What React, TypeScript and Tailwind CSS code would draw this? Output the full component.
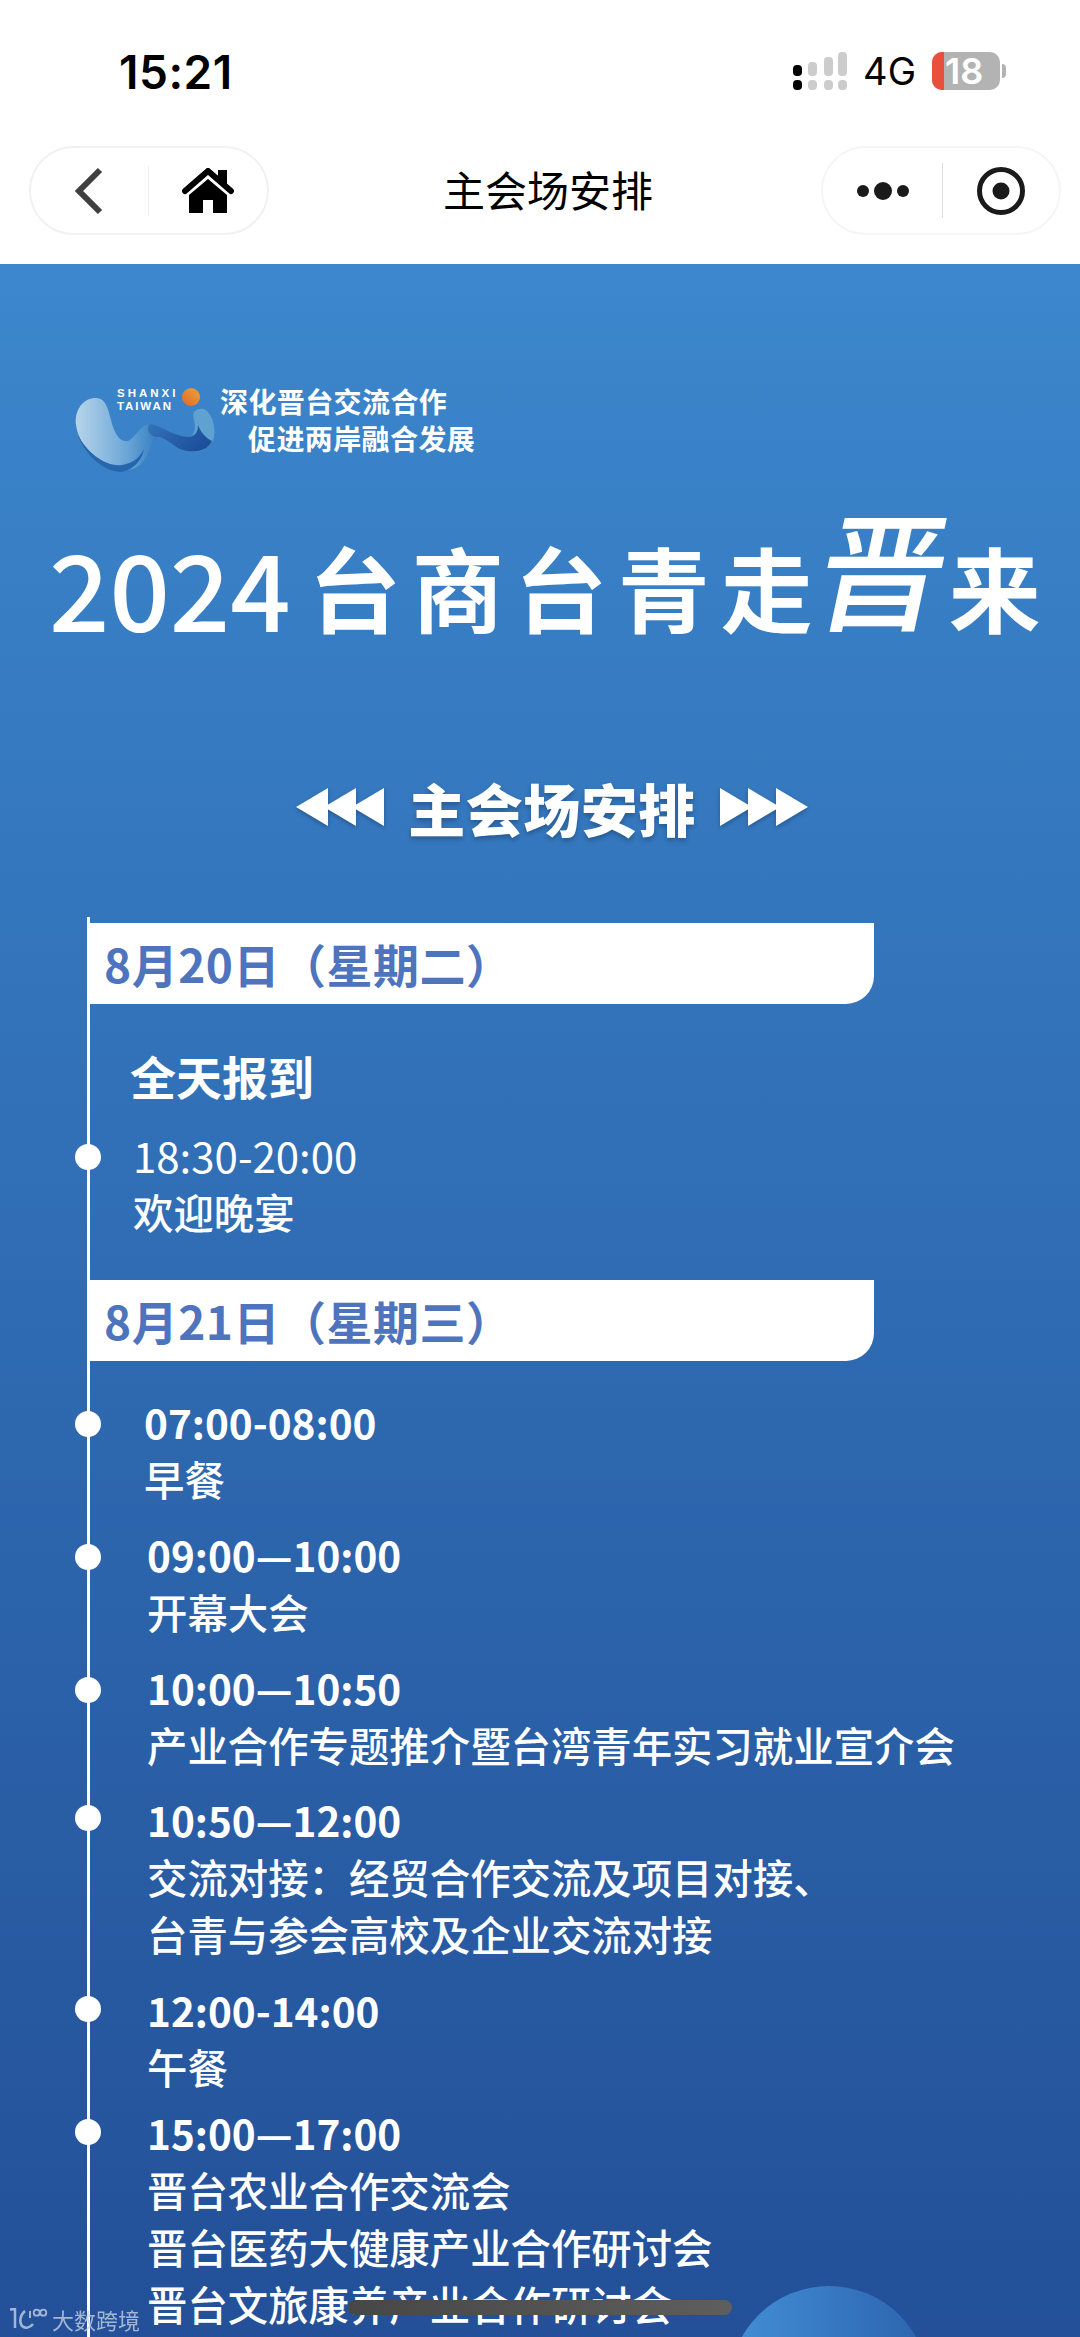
import React from "react";

const cjk = { fontFamily: '"Noto Sans CJK SC", "Noto Sans", sans-serif' };

function DateBar({ text, className }: { text: string; className: string }) {
  return (
    <div className={`flex h-[81px] w-[784px] items-center rounded-br-[28px] bg-white pl-[14px] text-[46px] font-bold tracking-[0.5px] text-[#4d74bd] ${className}`}>
      {text}
    </div>
  );
}

function Item({ time, lines, dotTop, className, bold = true }: { time: string; lines: string[]; dotTop: string; className: string; bold?: boolean }) {
  return (
    <div className={`relative leading-[57px] text-white ${className}`}>
      <div className={`absolute left-[-15px] h-[26px] w-[26px] rounded-full bg-white ${dotTop}`} />
      <div className={bold ? "text-[40.5px] font-semibold" : "text-[42px] font-normal"}>{time}</div>
      {lines.map((l) => (
        <div key={l} className="text-[40.4px] font-medium">{l}</div>
      ))}
    </div>
  );
}

function Logo() {
  return (
    <svg width="150" height="105" viewBox="0 0 150 105" className="shrink-0">
      <defs>
        <linearGradient id="lg1" x1="0" y1="0" x2="1" y2="0">
          <stop offset="0" stopColor="#b7d4ea" />
          <stop offset="0.35" stopColor="#6fa9d8" />
          <stop offset="0.55" stopColor="#3f85c6" />
          <stop offset="0.8" stopColor="#2f70b8" />
          <stop offset="0.86" stopColor="#5fa2d2" />
          <stop offset="1" stopColor="#5fa2d2" />
        </linearGradient>
        <linearGradient id="lg2" x1="0" y1="0" x2="1" y2="0.4">
          <stop offset="0" stopColor="#3473b8" />
          <stop offset="1" stopColor="#1c4f9c" />
        </linearGradient>
        <linearGradient id="sun" x1="0" y1="1" x2="1" y2="0">
          <stop offset="0" stopColor="#e4672a" />
          <stop offset="1" stopColor="#e7a33a" />
        </linearGradient>
      </defs>
      <path d="M6 50 C4 32 16 22 27 23 C36 24 38 34 41 45 C44 58 50 68 58 66 C66 62 70 50 80 49 C90 50 105 62 118 62 C126 60 126 50 123 42 C122 36 128 33 134 34 C142 38 146 52 144 62 C140 76 124 80 110 74 C100 68 92 60 85 62 C80 66 82 78 70 90 C60 98 44 96 30 86 C16 76 8 64 6 50 Z" fill="url(#lg1)" />
      <path d="M80 49 C90 50 105 62 118 62 C124 62 128 58 128 50 C132 60 138 64 142 66 C136 78 122 78 110 74 C100 68 92 60 85 62 C78 60 76 52 80 49 Z" fill="url(#lg2)" />
      <path d="M8 60 C16 76 34 92 52 90 C64 88 70 82 74 74 C72 86 62 96 50 97 C32 96 14 78 8 60 Z" fill="#2566ad" />
      <circle cx="121" cy="22" r="9" fill="url(#sun)" />
      <text x="47" y="22" fontFamily='"Liberation Sans", sans-serif' fontSize="11.5" fontWeight="700" letterSpacing="3" fill="#fff">SHANXI</text>
      <text x="47" y="35" fontFamily='"Liberation Sans", sans-serif' fontSize="11.5" fontWeight="700" letterSpacing="1.9" fill="#fff">TAIWAN</text>
    </svg>
  );
}

function Triple({ dir }: { dir: "l" | "r" }) {
  const pts =
    dir === "l"
      ? ["0,19 32,0 32,38", "28,19 60,0 60,38", "56,19 88,0 88,38"]
      : ["0,0 32,19 0,38", "28,0 60,19 28,38", "56,0 88,19 56,38"];
  return (
    <svg width="88" height="38" viewBox="0 0 88 38" className="drop-shadow-[0_2px_2px_rgba(0,0,0,0.25)]">
      {pts.map((p) => (
        <polygon key={p} points={p} fill="#fff" />
      ))}
    </svg>
  );
}

export default function App() {
  return (
    <div className="relative h-[2337px] w-[1080px] overflow-hidden bg-white" style={cjk}>
      {/* status bar */}
      <div className="flex h-[146px] items-start justify-between pl-[119px] pr-[74px] pt-[46px]">
        <div className="text-[46px] font-semibold leading-[52px] tracking-[0.5px] text-black" style={{ fontFamily: '"Inter", sans-serif' }}>15:21</div>
        <div className="flex items-center gap-[16px] pt-[6px]">
          <svg width="54" height="38" viewBox="0 0 54 38">
            <rect x="0" y="13" width="9" height="11" rx="4" fill="#000" />
            <rect x="0" y="28" width="9" height="10" rx="4" fill="#000" />
            <rect x="15" y="10" width="9" height="14" rx="4" fill="#ccc" />
            <rect x="15" y="28" width="9" height="10" rx="4" fill="#ccc" />
            <rect x="31" y="5" width="9" height="19" rx="4" fill="#ccc" />
            <rect x="31" y="28" width="9" height="10" rx="4" fill="#ccc" />
            <rect x="45" y="0" width="9" height="24" rx="4" fill="#ccc" />
            <rect x="45" y="28" width="9" height="10" rx="4" fill="#ccc" />
          </svg>
          <div className="text-[38px] font-normal leading-[38px] text-black" style={{ fontFamily: '"Inter", sans-serif' }}>4G</div>
          <div className="flex items-center gap-[2px]">
            <div className="flex h-[38px] w-[68px] items-center rounded-[10px] bg-[#b3b3b3]">
              <div className="h-full w-[12px] rounded-l-[10px] bg-[#e9503c]" />
              <div className="ml-[1px] text-[36px] font-semibold leading-[38px] text-white" style={{ fontFamily: '"Inter", sans-serif' }}>18</div>
            </div>
            <div className="h-[14px] w-[4px] rounded-r-full bg-[#b3b3b3]" />
          </div>
        </div>
      </div>

      {/* nav bar */}
      <div className="relative flex h-[118px] items-start justify-between pl-[29px] pr-[19px]">
        <div className="flex h-[89px] w-[240px] items-center rounded-full border-2 border-[#f1f1f1]">
          <div className="flex w-[117px] justify-center">
            <svg width="30" height="48" viewBox="0 0 30 48">
              <path d="M25 3 L4 24 L25 45" fill="none" stroke="#3f3f3f" strokeWidth="6" />
            </svg>
          </div>
          <div className="h-[50px] w-[1px] bg-[#eeeeee]" />
          <div className="flex flex-1 justify-center">
            <svg width="52" height="46" viewBox="0 0 52 46">
              <path d="M3 23 L26 3 L49 23" fill="none" stroke="#000" strokeWidth="6" strokeLinecap="round" strokeLinejoin="miter" />
              <rect x="36" y="2" width="9" height="14" fill="#000" />
              <path d="M26 11 L7 27 V45 H21 V32 H31 V45 H45 V27 Z" fill="#000" />
            </svg>
          </div>
        </div>
        <div className="absolute left-[16px] right-0 top-[15px] text-center text-[42px] leading-[56px] text-black">主会场安排</div>
        <div className="flex h-[89px] w-[240px] items-center rounded-full border-2 border-[#f5f5f5]">
          <div className="flex w-[119px] justify-center">
            <svg width="52" height="18" viewBox="0 0 52 18">
              <circle cx="6" cy="9" r="6" fill="#1a1a1a" />
              <circle cx="26" cy="9" r="9" fill="#1a1a1a" />
              <circle cx="46" cy="9" r="6" fill="#1a1a1a" />
            </svg>
          </div>
          <div className="h-[55px] w-[1px] bg-[#dddddd]" />
          <div className="flex flex-1 justify-center">
            <svg width="48" height="48" viewBox="0 0 48 48">
              <circle cx="24" cy="24" r="21.5" fill="none" stroke="#1a1a1a" strokeWidth="5" />
              <circle cx="24" cy="24" r="8.5" fill="#1a1a1a" />
            </svg>
          </div>
        </div>
      </div>

      {/* main */}
      <div className="relative h-[2073px] bg-gradient-to-b from-[#3c87cd] to-[#235098] text-white">
        {/* logo */}
        <div className="flex items-start pl-[70px] pt-[111px]">
          <Logo />
          <div className="pt-[8px] font-bold leading-[37px] text-white">
            <div className="text-[28px] tracking-[0.4px]">深化晋台交流合作</div>
            <div className="ml-[28px] text-[28px] tracking-[0.4px]">促进两岸融合发展</div>
          </div>
        </div>

        {/* title */}
        <div className="mt-[31px] flex h-[150px] items-center pl-[49px]">
          <div className="text-[106px] font-medium leading-[130px]">2024</div>
          <div className="ml-[18px] flex items-center text-[92px] font-bold leading-[130px]">
            <span className="w-[103px]">台</span>
            <span className="w-[103px]">商</span>
            <span className="w-[103px]">台</span>
            <span className="w-[103px]">青</span>
            <span className="w-[100px]">走</span>
            <span className="w-[128px] -translate-y-[20px] -skew-x-12 text-[128px] font-medium">晋</span>
            <span>来</span>
          </div>
        </div>

        {/* section heading */}
        <div className="mt-[111px] flex items-center justify-center gap-[24px] pl-[24px]">
          <Triple dir="l" />
          <div className="text-[57px] font-black leading-[70px] tracking-[0.5px]" style={{ textShadow: "0 3px 5px rgba(0,0,0,0.25)" }}>主会场安排</div>
          <Triple dir="r" />
        </div>

        {/* timeline */}
        <div className="relative ml-[87px] mt-[75px] border-l-[3px] border-white pb-[100px] pt-[6px]">
          <DateBar text="8月20日（星期二）" className="" />
          <div className="ml-[40px] mt-[38px] text-[46px] font-bold leading-[66px]">全天报到</div>
          <Item time="18:30-20:00" lines={["欢迎晚宴"]} dotTop="top-[18px]" className="pl-[43px] mt-[18px]" bold={false} />
          <DateBar text="8月21日（星期三）" className="mt-[40px]" />
          <Item time="07:00-08:00" lines={["早餐"]} dotTop="top-[18px]" className="pl-[54px] mt-[32px]" />
          <Item time="09:00—10:00" lines={["开幕大会"]} dotTop="top-[18px]" className="pl-[57px] mt-[19px]" />
          <Item time="10:00—10:50" lines={["产业合作专题推介暨台湾青年实习就业宣介会"]} dotTop="top-[18px]" className="pl-[57px] mt-[19px]" />
          <Item time="10:50—12:00" lines={["交流对接：经贸合作交流及项目对接、", "台青与参会高校及企业交流对接"]} dotTop="top-[14px]" className="pl-[57px] mt-[18px]" />
          <Item time="12:00-14:00" lines={["午餐"]} dotTop="top-[15px]" className="pl-[57px] mt-[19px]" />
          <Item time="15:00—17:00" lines={["晋台农业合作交流会", "晋台医药大健康产业合作研讨会", "晋台文旅康养产业合作研讨会"]} dotTop="top-[15px]" className="pl-[57px] mt-[9px]" />
        </div>

        {/* floating circle button */}
        <div className="absolute left-[729px] top-[2022px] h-[200px] w-[200px] rounded-full bg-gradient-to-r from-[#4390d6] to-[#2c62ae]" />
      </div>

      {/* home indicator */}
      <div className="absolute left-[348px] top-[2300px] h-[15px] w-[384px] rounded-full bg-gradient-to-r from-[#474747] to-[#5e5e5e]" />

      {/* watermark */}
      <div className="absolute left-[10px] top-[2307px] flex items-center gap-[4px] opacity-80">
        <svg width="38" height="22" viewBox="0 0 38 22" fill="none" stroke="#c3d0e4" strokeWidth="2.5">
          <path d="M0 1.5 L5 1 V20" />
          <path d="M15 3 C10 7 9 14 12 18 C15 21 20 20 23 16" />
          <path d="M20 3 V10" strokeWidth="2" />
          <circle cx="26.7" cy="4.7" r="3" strokeWidth="1.8" />
          <circle cx="33.3" cy="4.7" r="3" strokeWidth="1.8" />
        </svg>
        <div className="text-[22px] leading-[24px] text-[#c3d0e4]">大数跨境</div>
      </div>
    </div>
  );
}
